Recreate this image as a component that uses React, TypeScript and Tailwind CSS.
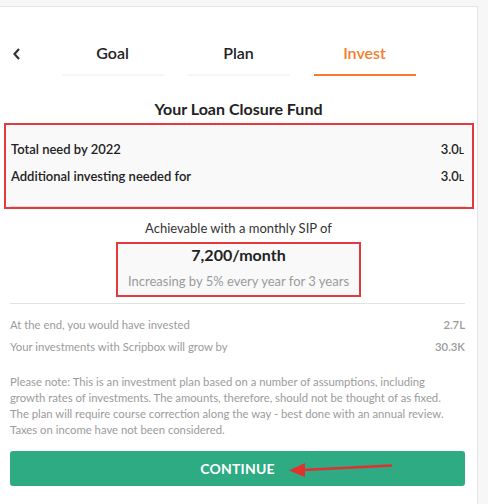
import React from 'react';

const tabs = [
    { l: 'Goal', active: false },
    { l: 'Plan', active: false },
    { l: 'Invest', active: true },
];

export default function App() {
    return (
        <div className="min-h-[504px] w-[488px] bg-[#f7f7f7] pt-[6px]" style={{ fontFamily: 'Lato, "Open Sans", sans-serif' }}>
            <div className="w-[478px] h-[498px] bg-white border-t border-r border-[#e4e4e4] text-[#222]">
                {/* Tabs */}
                <div className="relative flex justify-center gap-[24px] pt-[36px]">
                    <svg className="absolute left-[12px] top-[40px]" width="10" height="14" viewBox="0 0 10 14">
                        <path d="M7 2 L2.5 7 L7 12" fill="none" stroke="#333" strokeWidth="2.2" />
                    </svg>
                    {tabs.map(t => (
                        <div key={t.l} className="w-[102px] flex flex-col items-center">
                            <span className={`text-[16px] leading-[20px] font-semibold ${t.active ? 'text-[#f57c2a]' : 'text-[#222]'}`}>{t.l}</span>
                            <div className={`mt-[11px] h-[2px] w-full ${t.active ? 'bg-[#f57c2a]' : 'bg-[#f6f6f6]'}`} />
                        </div>
                    ))}
                </div>

                <h2 className="mt-[23px] text-center text-[16px] leading-[20px] font-bold">Your Loan Closure Fund</h2>

                {/* Fund summary */}
                <div className="mt-[4px] ml-[4px] w-[470px] h-[86px] border-2 border-[#e33a3f] bg-[#f9f9f9] flex flex-col">
                    <div className="pt-[14px] pl-[5px] pr-[8px] flex justify-between text-[13px] leading-[20px] font-semibold">
                        <span>Total need by 2022</span>
                        <span>3.0<span className="text-[10px]">L</span></span>
                    </div>
                    <div className="mt-[6px] pl-[5px] pr-[8px] flex justify-between text-[13px] leading-[20px] font-semibold">
                        <span>Additional investing needed for</span>
                        <span>3.0<span className="text-[10px]">L</span></span>
                    </div>
                    <div className="mt-[19px] ml-[4px] mr-[6px] h-px bg-[#dcdcdc]" />
                </div>

                <p className="mt-[10px] text-center text-[13px] leading-[18px] text-[#333]">Achievable with a monthly SIP of</p>

                <div className="mt-[5px] ml-[116px] w-[245px] h-[55px] border-2 border-[#e33a3f] bg-[#f9f9f9] flex flex-col items-center pt-[1px]">
                    <span className="text-[16px] leading-[20px] font-bold">7,200/month</span>
                    <span className="mt-[7px] text-[13px] leading-[18px] text-[#9b9b9b]">Increasing by 5% every year for 3 years</span>
                </div>

                <div className="mt-[6px] ml-[10px] w-[455px] h-px bg-[#e2e2e2]" />

                <div className="ml-[10px] w-[455px] text-[11.3px] leading-[16px] text-[#9b9b9b]">
                    <div className="mt-[13px] flex justify-between">
                        <span>At the end, you would have invested</span>
                        <span className="font-semibold">2.7L</span>
                    </div>
                    <div className="mt-[6px] flex justify-between">
                        <span>Your investments with Scripbox will grow by</span>
                        <span className="font-semibold">30.3K</span>
                    </div>
                    <p className="mt-[19px] pr-[10px]">
                        Please note: This is an investment plan based on a number of assumptions, including growth rates of investments. The amounts, therefore, should not be thought of as fixed. The plan will require course correction along the way - best done with an annual review. Taxes on income have not been considered.
                    </p>

                    {/* Continue */}
                    <button className="relative mt-[13px] w-full h-[35px] rounded-[3px] bg-[#2eab82] text-white text-[14px] font-bold tracking-[0.2px]">
                        CONTINUE
                        <svg className="absolute left-[278px] top-[8px]" width="106" height="18" viewBox="0 0 106 18">
                            <path d="M15 11 L104 6.5" stroke="#e0302f" strokeWidth="2.5" />
                            <path d="M1 11.5 L17 4 L17 18 Z" fill="#e0302f" />
                        </svg>
                    </button>
                </div>
            </div>
        </div>
    );
}
